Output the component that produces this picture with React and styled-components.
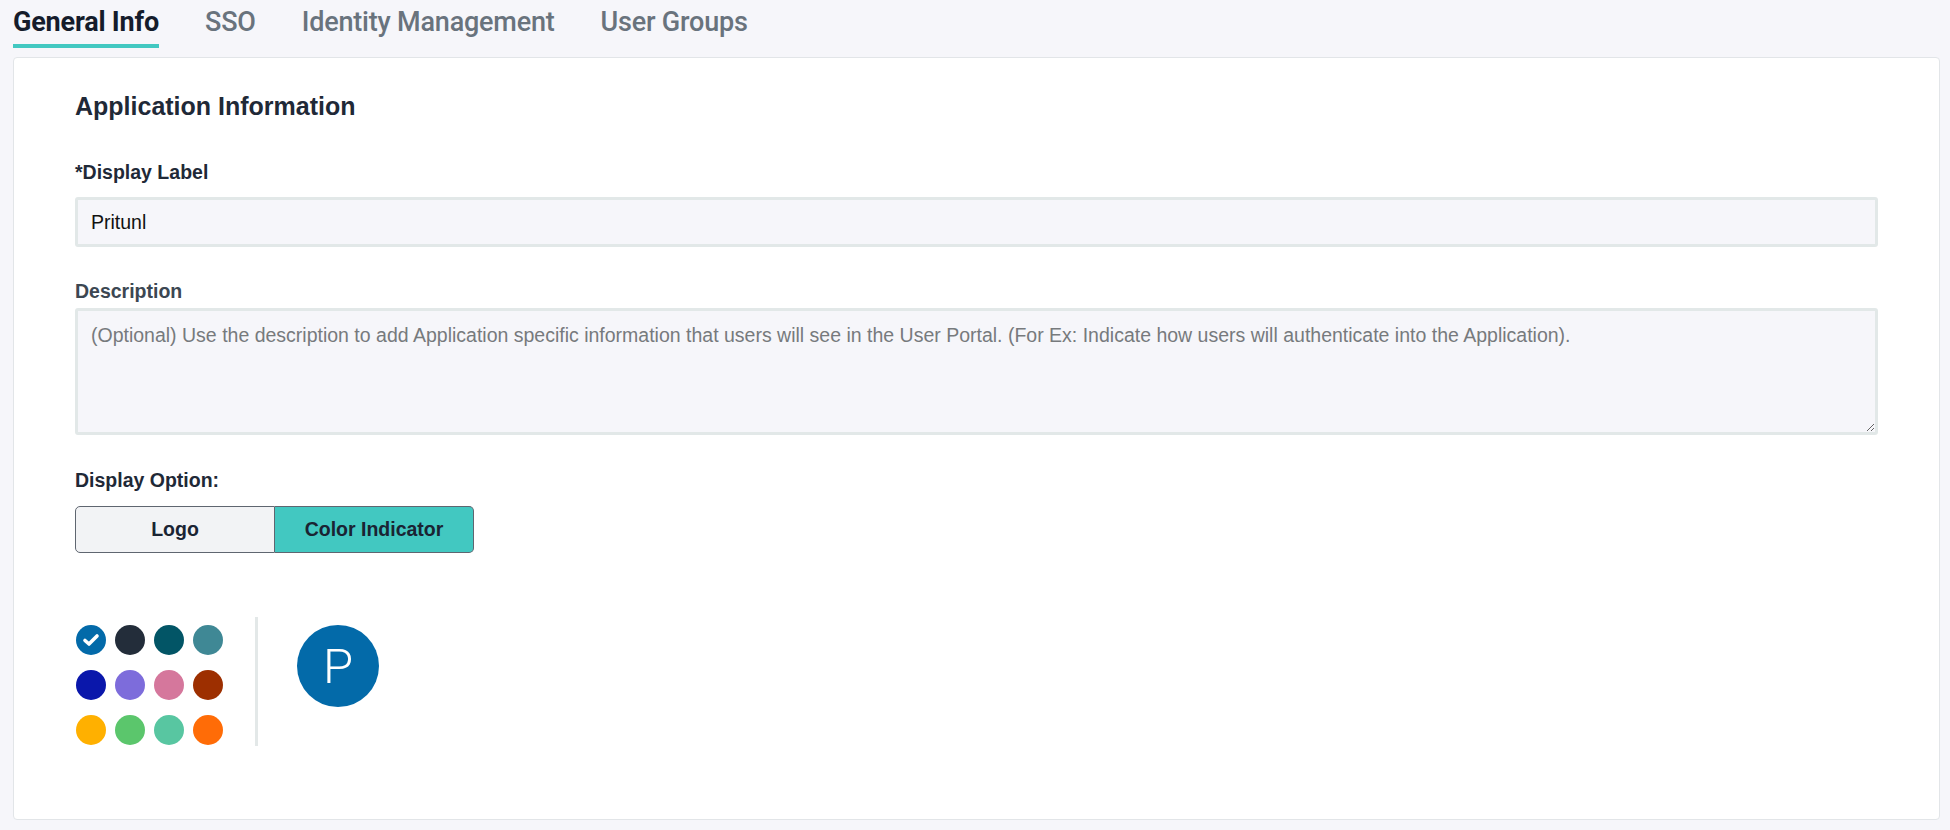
import React, { useState } from 'react';
import styled, { createGlobalStyle } from 'styled-components';

const GlobalStyle = createGlobalStyle`
  body {
    margin: 0;
    background: #f6f6fa;
    font-family: "Liberation Sans", Arial, sans-serif;
  }
`;

const Page = styled.div`
  width: 1950px;
  height: 830px;
  background: #f6f6fa;
  box-sizing: border-box;
  padding: 0 10px 0 13px;
`;

const Tabs = styled.div`
  display: flex;
  gap: 46px;
  height: 57px;
  box-sizing: border-box;
`;

const Tab = styled.div`
  font-family: Roboto, "Liberation Sans", sans-serif;
  font-size: 27px;
  font-weight: ${p => (p.active ? 700 : 500)};
  color: ${p => (p.active ? '#151c2b' : '#69737d')};
  line-height: 44px;
  height: 48px;
  box-sizing: border-box;
  border-bottom: 4px solid ${p => (p.active ? '#42c8c1' : 'transparent')};
  letter-spacing: -0.2px;
  cursor: pointer;
`;

const Card = styled.div`
  background: #fff;
  border: 1px solid #e2e5e8;
  border-radius: 4px;
  height: 763px;
  box-sizing: border-box;
  padding: 33px 61px 0 61px;
`;

const Heading = styled.h2`
  margin: 0 0 39px 0;
  font-size: 25px;
  line-height: 30px;
  font-weight: 700;
  color: #1f2937;
`;

const Label = styled.div`
  font-size: 19.5px;
  line-height: 24px;
  font-weight: 700;
  color: ${p => p.muted ? '#3c4752' : '#1f2937'};
  margin-bottom: ${p => p.gap}px;
`;

const TextInput = styled.input`
  display: block;
  width: 100%;
  height: 50px;
  box-sizing: border-box;
  border: 3px solid #e2e8e8;
  border-radius: 3px;
  background: #f6f6fa;
  padding: 0 13px;
  font-family: "Liberation Sans", Arial, sans-serif;
  font-size: 19.5px;
  color: #111;
  outline: none;
  margin-bottom: 32px;
`;

const TextArea = styled.textarea`
  display: block;
  width: 100%;
  height: 127px;
  box-sizing: border-box;
  border: 3px solid #e2e8e8;
  border-radius: 3px;
  background: #f6f6fa;
  padding: 13px 13px;
  font-family: "Liberation Sans", Arial, sans-serif;
  font-size: 19.5px;
  line-height: 23px;
  color: #111;
  outline: none;
  margin: 0 0 33px 0;
  resize: vertical;

  &::placeholder {
    color: #777a7d;
  }
`;

const Toggle = styled.div`
  display: flex;
  width: 399px;
`;

const ToggleButton = styled.button`
  flex: 1;
  height: 47px;
  box-sizing: border-box;
  border: 1.5px solid #5f6670;
  border-radius: ${p => (p.side === 'left' ? '5px 0 0 5px' : '0 5px 5px 0')};
  ${p => p.side === 'right' && 'border-left: none;'}
  background: ${p => (p.active ? '#42c8c1' : '#f2f3f5')};
  font-family: "Liberation Sans", Arial, sans-serif;
  font-size: 19.5px;
  font-weight: 700;
  color: #1a2433;
  cursor: pointer;
`;

const ColorSection = styled.div`
  display: flex;
  align-items: flex-start;
  margin-top: 64px;
`;

const Swatches = styled.div`
  display: grid;
  grid-template-columns: repeat(4, 30px);
  grid-auto-rows: 30px;
  gap: 15px 9px;
  padding-top: 8px;
  padding-left: 1px;
`;

const Swatch = styled.button`
  width: 30px;
  height: 30px;
  border-radius: 50%;
  border: none;
  padding: 0;
  background: ${p => p.color};
  display: flex;
  align-items: center;
  justify-content: center;
  cursor: pointer;
`;

const Divider = styled.div`
  width: 3px;
  height: 129px;
  background: #e3e8e8;
  margin: 0 39px 0 32px;
`;

const Avatar = styled.div`
  margin-top: 8px;
  width: 82px;
  height: 82px;
  border-radius: 50%;
  background: ${p => p.color};
  color: #fff;
  display: flex;
  align-items: center;
  justify-content: center;
  font-family: Roboto, "Liberation Sans", sans-serif;
  font-weight: 300;
  font-size: 49px;
  line-height: 1;
`;

const COLORS = [
  '#036aa9', '#232d3a', '#025566', '#3f8895',
  '#0a17ab', '#7d6cdb', '#d5779c', '#9d2f00',
  '#ffb000', '#5bc66c', '#58c6a1', '#ff6c07',
];

const Check = () => (
  <svg width="20" height="20" viewBox="0 0 20 20">
    <path d="M4 10.5 L8 14 L16 6" fill="none" stroke="#fff" strokeWidth="3.6" strokeLinecap="round" strokeLinejoin="round" />
  </svg>
);

export default function App() {
  const [mode, setMode] = useState('color');
  const [color, setColor] = useState(COLORS[0]);

  return (
    <Page>
      <GlobalStyle />
      <Tabs>
        <Tab active>General Info</Tab>
        <Tab>SSO</Tab>
        <Tab>Identity Management</Tab>
        <Tab>User Groups</Tab>
      </Tabs>
      <Card>
        <Heading>Application Information</Heading>
        <Label gap={13}>*Display Label</Label>
        <TextInput defaultValue="Pritunl" />
        <Label muted gap={5}>Description</Label>
        <TextArea placeholder="(Optional) Use the description to add Application specific information that users will see in the User Portal. (For Ex: Indicate how users will authenticate into the Application)." />
        <Label gap={14}>Display Option:</Label>
        <Toggle>
          <ToggleButton side="left" active={mode === 'logo'} onClick={() => setMode('logo')}>Logo</ToggleButton>
          <ToggleButton side="right" active={mode === 'color'} onClick={() => setMode('color')}>Color Indicator</ToggleButton>
        </Toggle>
        <ColorSection>
          <Swatches>
            {COLORS.map(c => (
              <Swatch key={c} color={c} onClick={() => setColor(c)}>
                {c === color && <Check />}
              </Swatch>
            ))}
          </Swatches>
          <Divider />
          <Avatar color={color}>P</Avatar>
        </ColorSection>
      </Card>
    </Page>
  );
}
